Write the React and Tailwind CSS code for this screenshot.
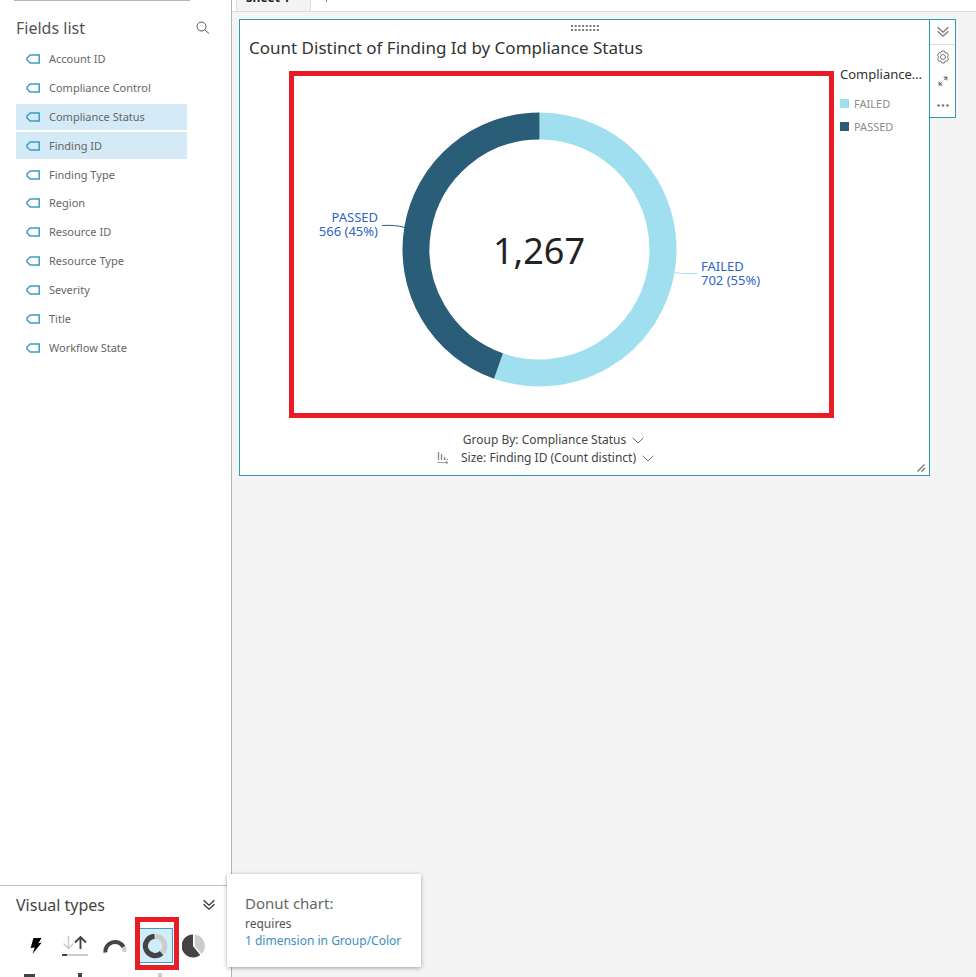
import React from "react";

const fields = [
  "Account ID",
  "Compliance Control",
  "Compliance Status",
  "Finding ID",
  "Finding Type",
  "Region",
  "Resource ID",
  "Resource Type",
  "Severity",
  "Title",
  "Workflow State",
];
const selectedFields = ["Compliance Status", "Finding ID"];

function FieldIcon() {
  return (
    <svg width="14" height="10" viewBox="0 0 14 10" fill="none" stroke="#3c9cc4" strokeWidth="1.5" aria-hidden="true">
      <path d="M4.2 1H13.2V9H4.2L1 6V4Z" />
    </svg>
  );
}

function DoubleChevron({ className }) {
  return (
    <svg width="12" height="12" viewBox="0 0 12 12" fill="none" stroke="currentColor" strokeWidth="1.3" className={className} aria-hidden="true">
      <path d="M.6 1.2L6 6.2L11.4 1.2M.6 5.2L6 10.2L11.4 5.2" />
    </svg>
  );
}

function Chevron() {
  return (
    <svg width="12" height="7" viewBox="0 0 12 7" fill="none" stroke="#666" strokeWidth="1" aria-hidden="true">
      <path d="M.7 .8L6 6L11.3 .8" />
    </svg>
  );
}

function FieldsList() {
  return (
    <section className="pl-4">
      <div className="flex h-[45px] items-center justify-between pt-2 pr-[21px]">
        <h2 className="text-[16px] leading-[22px] text-[#545454]">Fields list</h2>
        <button type="button" aria-label="Search fields">
          <svg width="14" height="14" viewBox="0 0 14 14" fill="none" stroke="#555" strokeWidth="1" aria-hidden="true">
            <circle cx="5.5" cy="5.5" r="4.5" />
            <path d="M8.8 8.8L13 12.6" />
          </svg>
        </button>
      </div>
      <ul className="mr-11 grid h-[315px] auto-rows-fr gap-[2px]">
        {fields.map((name) => (
          <li key={name} className="flex">
            <button
              type="button"
              aria-pressed={selectedFields.includes(name)}
              className={
                "flex w-full items-center gap-[9px] pl-[10px] text-left text-[11px] leading-4 text-[#666] " +
                (selectedFields.includes(name) ? "bg-[#d4eaf6]" : "")
              }
            >
              <FieldIcon />
              {name}
            </button>
          </li>
        ))}
      </ul>
    </section>
  );
}

function BoltIcon() {
  return (
    <svg width="14" height="18" viewBox="0 0 14 18" fill="#000" aria-hidden="true">
      <path d="M4.5 1H12.5L9.3 6.2L12.8 5.6L3.4 17L5.8 10.4L1.6 10.9Z" />
    </svg>
  );
}

function KpiIcon() {
  return (
    <svg width="26" height="22" viewBox="0 0 26 22" fill="none" aria-hidden="true">
      <path d="M6.5 1V13M1.5 8.5L6.5 13.5L11.5 8.5" stroke="#ccc" strokeWidth="1.5" />
      <path d="M18.5 14V2M13 7.5L18.5 2L24 7.5" stroke="#444" strokeWidth="1.9" />
      <path d="M0 20H26" stroke="#ccc" strokeWidth="2" />
      <path d="M0 20H5" stroke="#444" strokeWidth="2" />
    </svg>
  );
}

function GaugeIcon() {
  return (
    <svg width="24" height="16" viewBox="0 0 24 16" fill="none" strokeWidth="4" aria-hidden="true">
      <path d="M2.4 14.5A9.7 9.7 0 0 1 20.6 9" stroke="#444" />
      <path d="M20.8 9.4A9.7 9.7 0 0 1 21.6 14" stroke="#ccc" />
    </svg>
  );
}

function DonutIcon() {
  return (
    <svg width="26" height="26" viewBox="0 0 26 26" fill="none" strokeWidth="5.2" aria-hidden="true">
      <path d="M13.6 3.4A9.6 9.6 0 0 1 20.2 19.4" stroke="#ccc" />
      <path d="M12.6 3.4A9.6 9.6 0 1 0 19.6 20" stroke="#444" />
    </svg>
  );
}

function PieIcon() {
  return (
    <svg width="24" height="26" viewBox="0 0 24 26" aria-hidden="true">
      <path d="M11 1.5A11.5 11.5 0 1 0 18.2 22L11 13Z" fill="#444" />
      <path d="M12.6 1.5A11.5 11.5 0 0 1 19.5 21L12.6 12.5Z" fill="#ccc" />
    </svg>
  );
}

function VisualTypes() {
  const cell = "flex h-[35px] items-center justify-center";
  return (
    <section className="h-[92px] shrink-0 overflow-hidden border-t border-[#bfbfbf] pl-4">
      <div className="flex h-[42px] items-center justify-between pr-4 pb-1">
        <h2 className="text-[16px] leading-[22px] text-[#444]">Visual types</h2>
        <button type="button" aria-label="Collapse visual types">
          <DoubleChevron className="text-[#333]" />
        </button>
      </div>
      <div className="grid w-[198px] grid-cols-5">
        <button type="button" aria-label="AutoGraph" className={cell}><BoltIcon /></button>
        <button type="button" aria-label="KPI" className={cell}><KpiIcon /></button>
        <button type="button" aria-label="Gauge chart" className={cell}><GaugeIcon /></button>
        <div className="relative flex justify-center">
          <button type="button" aria-label="Donut chart" aria-pressed="true" className="flex h-[35px] w-9 items-center justify-center border border-[#3c9cc4] bg-[#d0edfa]">
            <DonutIcon />
          </button>
          <div className="pointer-events-none absolute -top-[11px] -right-[5px] -bottom-[7px] left-0 border-[5px] border-[#e81c25]" />
        </div>
        <button type="button" aria-label="Pie chart" className={cell}><PieIcon /></button>
      </div>
      <svg width="200" height="10" viewBox="0 0 200 10" className="mt-[10px]" aria-hidden="true">
        <path d="M8 1H19V10H8Z" fill="#444" />
        <path d="M62 0H66V10H62Z" fill="#444" />
        <path d="M142 0H146V10H142Z" fill="#ccc" />
      </svg>
    </section>
  );
}

function DonutChart() {
  return (
    <svg viewBox="0 0 535 337" className="block h-auto w-full" role="img" aria-label="Findings by compliance status">
      <g fill="none" strokeWidth="27">
        <path d="M245.5 50A123.5 123.5 0 1 1 204.5 290" stroke="#a0dff0" />
        <path d="M245.5 50A123.5 123.5 0 0 0 204.5 290" stroke="#2a5d78" />
      </g>
      <path d="M88 149.500C97 149 104 149.500 111 151.500" fill="none" stroke="#2a5d78" />
      <path d="M381 196.500C387 198 392 197.500 403 197.500" fill="none" stroke="#a0dff0" />
      <g fontSize="13" fill="#2f64c8">
        <text textAnchor="end">
          <tspan x="84" y="146">PASSED</tspan>
          <tspan x="84" y="160">566 (45%)</tspan>
        </text>
        <text>
          <tspan x="407" y="195">FAILED</tspan>
          <tspan x="407" y="209">702 (55%)</tspan>
        </text>
      </g>
      <text x="245" y="188" textAnchor="middle" fontSize="36" fill="#222">1,267</text>
    </svg>
  );
}

function Legend() {
  return (
    <div className="w-[95px] shrink-0 pl-[6px]">
      <p className="truncate text-[13px] leading-[18px] text-[#333]">Compliance…</p>
      <ul className="mt-[9px] text-[11px] leading-[23px] text-[#8c8c8c]">
        <li className="flex items-center gap-[5px]"><span className="size-[9px] bg-[#a0dff0]" />FAILED</li>
        <li className="flex items-center gap-[5px]"><span className="size-[9px] bg-[#2a5d78]" />PASSED</li>
      </ul>
    </div>
  );
}

function VisualToolbar() {
  const tool = "flex h-6 w-full items-center justify-center";
  return (
    <div className="-ml-px flex w-[27px] flex-col items-center self-start border border-[#2f9ab5] bg-white text-[#777]">
      <button type="button" aria-label="Visual menu" className="flex h-[25px] w-full items-center justify-center border-b border-[#ddd]">
        <DoubleChevron />
      </button>
      <button type="button" aria-label="Format visual" className={tool}>
        <svg width="12" height="14" viewBox="0 0 12 14" fill="none" stroke="currentColor" aria-hidden="true">
          <path d="M4.600 1H7.400L8 2.700L10.200 2.900L11.400 5.200L10.400 7L11.400 8.800L10.200 11.100L8 11.300L7.400 13H4.600L4 11.300L1.800 11.100L.6 8.800L1.600 7L.6 5.200L1.800 2.900L4 2.700Z" />
          <circle cx="6" cy="7" r="2.500" />
        </svg>
      </button>
      <button type="button" aria-label="Maximize" className={tool}>
        <svg width="10" height="10" viewBox="0 0 10 10" fill="currentColor" stroke="currentColor" aria-hidden="true">
          <path d="M5.800 4.200L8.300 1.700M4.200 5.800L1.700 8.300" />
          <path d="M5.500 .8H9.200V4.500ZM4.500 9.200H.8V5.500Z" strokeWidth=".4" />
        </svg>
      </button>
      <button type="button" aria-label="More options" className="flex h-6 w-full items-center justify-center">
        <svg width="12" height="3" viewBox="0 0 12 3" fill="currentColor" aria-hidden="true">
          <circle cx="1.500" cy="1.500" r="1.300" />
          <circle cx="6" cy="1.500" r="1.300" />
          <circle cx="10.500" cy="1.500" r="1.300" />
        </svg>
      </button>
    </div>
  );
}

function VisualCard() {
  return (
    <article className="relative flex min-w-0 flex-1 flex-col border border-[#2f9ab5] bg-white pb-2">
      <svg width="28" height="6" viewBox="0 0 28 6" className="mt-[5px] self-center" aria-hidden="true">
        <path d="M0 1H28M0 5H28" stroke="#777" strokeWidth="2" strokeDasharray="2 1.700" />
      </svg>
      <h1 className="mt-[5px] pl-[9px] text-[17px] leading-6 text-[#333]">Count Distinct of Finding Id by Compliance Status</h1>
      <div className="mt-[5px] flex">
        <div className="mt-[6px] ml-[49px] min-w-0 flex-1 border-[5px] border-[#e81c25]">
          <DonutChart />
        </div>
        <Legend />
      </div>
      <div className="mt-[13px] flex flex-col items-center pr-[62px] text-[12px] leading-[18px] text-[#444]">
        <button type="button" className="flex items-center gap-[6px]">
          Group By: Compliance Status <Chevron />
        </button>
        <div className="flex items-center gap-3 pr-4">
          <button type="button" aria-label="Sort">
            <svg width="12" height="12" viewBox="0 0 12 12" fill="none" stroke="#888" aria-hidden="true">
              <path d="M1.500 0V8M4.500 2V8M7.500 5V8M10.500 7V8" strokeWidth="1.300" />
              <path d="M0 10.500H11M9 8.800L11 10.500L9 12" strokeWidth=".8" />
            </svg>
          </button>
          <button type="button" className="flex items-center gap-[6px]">
            Size: Finding ID (Count distinct) <Chevron />
          </button>
        </div>
      </div>
      <svg width="9" height="8" viewBox="0 0 9 8" className="absolute right-[3px] bottom-[3px]" stroke="#777" strokeWidth="1.400" aria-hidden="true">
        <path d="M.5 7.500L7.500 .5M4.500 7.500L8 4" />
      </svg>
    </article>
  );
}

export default function App() {
  return (
    <div className="relative flex h-screen overflow-hidden bg-[#f4f4f4] font-['Noto_Sans',sans-serif]">
      <aside className="flex w-[232px] shrink-0 flex-col border-r border-[#b5b5b5] bg-white">
        <div className="mr-[41px] ml-[14px] h-px bg-[#b5b5b5]" />
        <FieldsList />
        <div className="flex-1" />
        <VisualTypes />
      </aside>
      <main className="min-w-0 flex-1">
        <nav className="flex h-3 items-end overflow-hidden border-b border-[#ddd] bg-white pl-1">
          <button type="button" className="-mb-px h-5 w-[75px] shrink-0 border-x border-[#ddd] bg-[#f4f4f4] pb-2 pl-[9px] text-left text-[12px] leading-3 font-bold text-[#222]">
            Sheet 1
          </button>
          <button type="button" aria-label="Add sheet" className="ml-[10px] pb-[9px]">
            <svg width="11" height="11" viewBox="0 0 11 11" stroke="#777" aria-hidden="true">
              <path d="M5.500 0V11M0 5.500H11" />
            </svg>
          </button>
        </nav>
        <div className="flex pt-[7px] pr-5 pl-[7px]">
          <VisualCard />
          <VisualToolbar />
        </div>
      </main>
      <div role="tooltip" className="absolute bottom-[10px] left-[227px] w-[194px] bg-white px-[18px] pt-[17px] pb-[18px] text-[12px] leading-[17px] text-[#555] shadow-[0_1px_4px_rgba(0,0,0,0.35)]">
        <p className="text-[15px] leading-6 text-[#666]">Donut chart:</p>
        <p>requires</p>
        <p className="whitespace-nowrap text-[#3d8fbd]">1 dimension in Group/Color</p>
      </div>
    </div>
  );
}
